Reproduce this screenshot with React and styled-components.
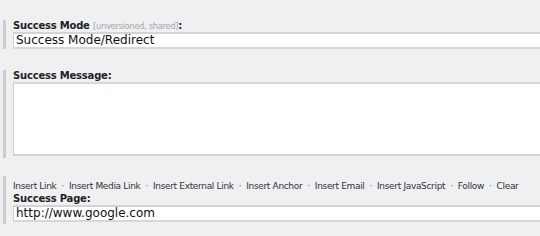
import React from 'react'
import styled, { createGlobalStyle } from 'styled-components'

const Global = createGlobalStyle`
  html, body {
    margin: 0;
    padding: 0;
    background: #eff0f2;
    overflow: hidden;
  }
  body {
    font-family: Tahoma, "DejaVu Sans", sans-serif;
  }
`

const Page = styled.div`
  width: 560px;
  padding-top: 20px;
  padding-left: 3px;
`

const Field = styled.div`
  border-left: 3px solid #cbcccf;
  padding-left: 7px;
  padding-bottom: ${p => p.$bottom || 0}px;
  margin-bottom: ${p => p.$gap || 0}px;
`

const Label = styled.div`
  font-family: "DejaVu Sans", sans-serif;
  font-size: 10px;
  font-weight: bold;
  color: #222;
  line-height: 12px;
  letter-spacing: -0.2px;
`

const Hint = styled.span`
  font-weight: normal;
  font-size: 8.5px;
  letter-spacing: -0.4px;
  color: #a6a8ab;
`

const TextInput = styled.div`
  box-sizing: border-box;
  height: 17px;
  background: #fff;
  border-top: 2px solid #d3d4d6;
  border-bottom: 2px solid #d6d7d9;
  border-left: 1px solid #cfd0d2;
  font-family: "DejaVu Sans", sans-serif;
  font-size: 12px;
  line-height: 13px;
  color: #111;
  padding-left: 2px;
`

const TextArea = styled.div`
  box-sizing: border-box;
  height: 74px;
  background: #fff;
  border-top: 2px solid #d7d8da;
  border-bottom: 2px solid #d3d4d6;
  border-left: 1px solid #cfd0d2;
`

const Toolbar = styled.div`
  display: flex;
  align-items: center;
  font-family: "DejaVu Sans", sans-serif;
  font-size: 9px;
  letter-spacing: -0.33px;
  color: #333;
  line-height: 14px;
  padding-top: 3px;
`

const Dot = styled.span`
  color: #666;
  margin: 0 5px;
`

const links = ['Insert Link', 'Insert Media Link', 'Insert External Link', 'Insert Anchor', 'Insert Email', 'Insert JavaScript', 'Follow', 'Clear']

const App = () => {
  return (
    <>
      <Global />
      <Page>
        <Field $gap={21}>
          <Label>Success Mode <Hint>[unversioned, shared]</Hint>:</Label>
          <TextInput>Success Mode/Redirect</TextInput>
        </Field>
        <Field $gap={18} $bottom={2}>
          <Label>Success Message:</Label>
          <TextArea />
        </Field>
        <Field $bottom={2}>
          <Toolbar>
            {links.map((l, i) => (
              <React.Fragment key={l}>
                {i > 0 && <Dot>·</Dot>}
                <span>{l}</span>
              </React.Fragment>
            ))}
          </Toolbar>
          <Label>Success Page:</Label>
          <TextInput>http://www.google.com</TextInput>
        </Field>
      </Page>
    </>
  )
}

export default App
